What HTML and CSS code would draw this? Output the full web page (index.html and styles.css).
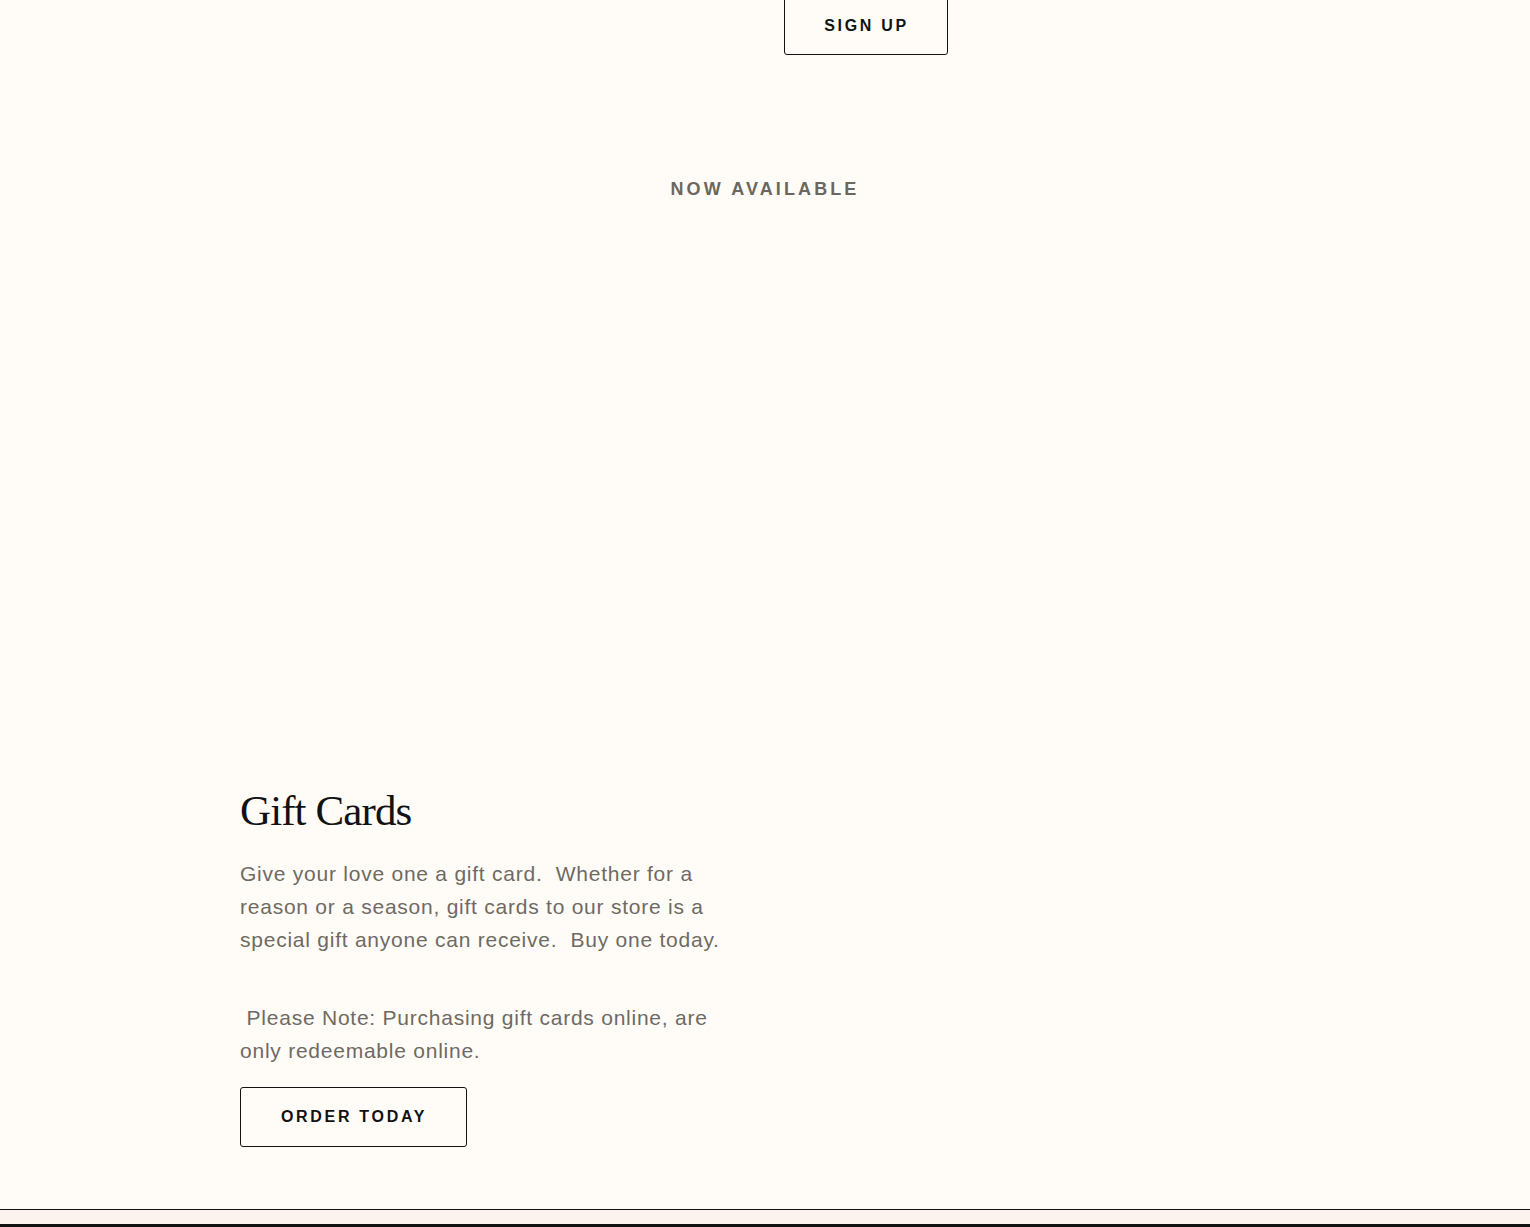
FILE: index.html
```html
<!DOCTYPE html>
<html lang="en">
<head>
<meta charset="utf-8">
<title>Gift Cards</title>
<link rel="stylesheet" href="styles.css">
</head>
<body>
<main class="page">
  <section class="signup">
    <div class="container signup-row">
      <button class="btn btn-signup" type="button">Sign up</button>
    </div>
  </section>

  <section class="feature">
    <h2 class="eyebrow">Now available</h2>
    <div class="media-space"></div>
    <div class="container">
      <div class="content">
        <h3 class="title">Gift Cards</h3>
        <p class="text">Give your love one a gift card.&nbsp; Whether for a reason or a season, gift cards to our store is a special gift anyone can receive.&nbsp; Buy one today.</p>
        <p class="text note">&nbsp;Please Note: Purchasing gift cards online, are only redeemable online.</p>
        <a class="btn btn-order" href="#">Order today</a>
      </div>
    </div>
  </section>

  <footer class="footer">
    <div class="footer-band"></div>
    <div class="footer-dark"></div>
  </footer>
</main>
</body>
</html>
```

FILE: styles.css
```css
* { box-sizing: border-box; }

html, body {
  margin: 0;
  padding: 0;
}

body {
  background: #fffcf8;
  font-family: "Liberation Sans", Arial, Helvetica, sans-serif;
  color: #121212;
}

.container {
  width: 1050px;
  margin: 0 auto;
}

.signup-row {
  display: flex;
}

.btn {
  display: inline-flex;
  align-items: center;
  justify-content: center;
  height: 60px;
  border: 1px solid #121212;
  border-radius: 3px;
  background: transparent;
  color: #121212;
  font-family: "Liberation Sans", Arial, Helvetica, sans-serif;
  font-size: 16px;
  font-weight: 700;
  letter-spacing: 2.7px;
  text-transform: uppercase;
  text-decoration: none;
  padding: 0 38px 0 39px;
}

.btn-signup {
  margin-left: 544px;
  margin-top: -5px;
  width: 164px;
  padding: 0 0 0 1px;
  padding-top: 2px;
}

.eyebrow {
  margin: 122px 0 0;
  text-align: center;
  font-size: 18px;
  line-height: 25px;
  font-weight: 700;
  letter-spacing: 3.1px;
  text-transform: uppercase;
  color: #6b675d;
}

.media-space {
  height: 583px;
}

.content {
  width: 495px;
}

.title {
  margin: 0;
  font-family: "Liberation Serif", "Times New Roman", serif;
  font-weight: 400;
  font-size: 43px;
  line-height: 52px;
  letter-spacing: -0.9px;
  color: #121212;
}

.text {
  margin: 20px 0 0;
  font-size: 21px;
  line-height: 33px;
  letter-spacing: 0.76px;
  color: #6e6a63;
}

.note {
  margin-top: 45px;
}

.btn-order {
  margin-top: 20px;
  width: 227px;
}

.footer {
  margin-top: 62px;
  border-top: 1px solid #121212;
}

.footer-band {
  height: 14px;
  background: #fcf2ee;
}

.footer-dark {
  height: 40px;
  background: #121212;
}
```
